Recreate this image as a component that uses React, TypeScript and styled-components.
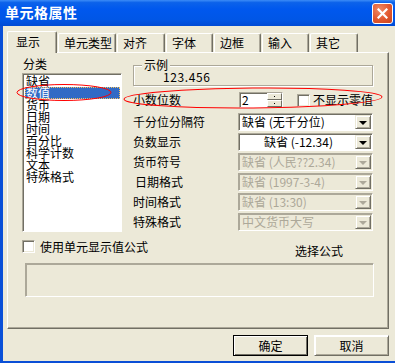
import { FC } from "react";
import styled, { createGlobalStyle } from "styled-components";

const GlobalStyle = createGlobalStyle`
  html, body {
    margin: 0;
    padding: 0;
    background: #ffffff;
  }
  body {
    font-family: "Noto Sans CJK SC", "Liberation Sans", sans-serif;
    font-size: 12px;
    color: #000000;
  }
`;

const FACE = "#ECE9D8";
const SHADOW = "#ACA899";
const DARK = "#716F64";
const GRAY_TEXT = "#ACA899";

// window frame
const Window = styled.div`
  position: relative;
  width: 395px;
  height: 363px;
  display: flex;
  flex-direction: column;
  overflow: hidden;
`;

const TitleBar = styled.div`
  height: 26px;
  flex: none;
  display: flex;
  align-items: center;
  justify-content: space-between;
  padding: 0 2px 2px 5px;
  box-sizing: border-box;
  background: linear-gradient(
    180deg,
    #3c8cf7 0%,
    #0c62ea 10%,
    #0058ee 35%,
    #0056e6 75%,
    #004ad4 100%
  );
`;

const Title = styled.span`
  color: #ffffff;
  font-size: 14px;
  font-weight: bold;
  letter-spacing: 0.5px;
  line-height: 16px;
`;

const CloseButton = styled.div`
  width: 21px;
  height: 21px;
  margin-top: 2px;
  box-sizing: border-box;
  border: 1px solid #ffffff;
  border-radius: 3px;
  background: radial-gradient(circle at 35% 30%, #f08a66 0%, #e2582f 55%, #c8431d 100%);
  display: flex;
  align-items: center;
  justify-content: center;
`;

const Frame = styled.div`
  flex: 1;
  display: flex;
  flex-direction: column;
  background: ${FACE};
  border-left: 3px solid #0a50d8;
  border-bottom: 2px solid #0a4fd6;
  padding: 5px 6px 0 4px;
`;

// tabs
const TabStrip = styled.div`
  display: flex;
  align-items: flex-start;
  height: 22px;
  margin-bottom: -1px;
  position: relative;
  z-index: 1;
`;

const Tab = styled.div<{ $active?: boolean; $w: number }>`
  width: ${(p) => p.$w}px;
  box-sizing: border-box;
  height: ${(p) => (p.$active ? 22 : 19)}px;
  margin-top: ${(p) => (p.$active ? 0 : 2)}px;
  margin-right: 1px;
  padding: ${(p) => (p.$active ? "3px 0 0 8px" : "2px 0 0 5px")};
  line-height: 14px;
  background: ${FACE};
  border-top: 1px solid #ffffff;
  border-left: 1px solid #ffffff;
  border-right: 1px solid ${DARK};
  box-shadow: inset -1px 0 0 ${SHADOW};
  border-radius: 2px 2px 0 0;
`;

const Panel = styled.div`
  height: 277px;
  box-sizing: border-box;
  border-top: 1px solid #ffffff;
  border-left: 1px solid #ffffff;
  border-right: 1px solid ${DARK};
  border-bottom: 1px solid ${DARK};
  box-shadow: inset -1px -1px 0 ${SHADOW};
  padding: 4px 15px 0 14px;
  display: flex;
  flex-direction: column;
`;

const TopSection = styled.div`
  display: flex;
  gap: 11px;
`;

const LeftCol = styled.div`
  width: 100px;
  display: flex;
  flex-direction: column;
`;

const Caption = styled.div`
  height: 16px;
  line-height: 14px;
  padding-left: 1px;
`;

const ListBox = styled.div`
  height: 159px;
  box-sizing: border-box;
  background: #ffffff;
  border-top: 1px solid ${SHADOW};
  border-left: 1px solid ${SHADOW};
  border-right: 1px solid #ffffff;
  border-bottom: 1px solid #ffffff;
  box-shadow: inset 1px 1px 0 ${DARK};
  padding: 1px 1px 0 2px;
`;

const ListItem = styled.div<{ $selected?: boolean }>`
  height: 12px;
  line-height: 12px;
  padding-left: 1px;
  box-sizing: border-box;
  white-space: nowrap;
  color: ${(p) => (p.$selected ? "#ffffff" : "#000000")};
  background: ${(p) => (p.$selected ? "#316ac5" : "transparent")};
  outline: ${(p) => (p.$selected ? "1px dotted #f0c060" : "none")};
  outline-offset: -1px;
`;

const RightCol = styled.div`
  width: 240px;
  display: flex;
  flex-direction: column;
`;

const GroupBox = styled.fieldset`
  margin: 1px 0 0;
  padding: 0 0 2px 8px;
  height: 28px;
  box-sizing: border-box;
  border: 1px solid ${SHADOW};
  box-shadow: 1px 1px 0 #ffffff, inset 1px 1px 0 #ffffff;
`;

const Legend = styled.legend`
  padding: 0 2px;
  line-height: 14px;
  background: ${FACE};
`;

const SampleText = styled.div`
  padding-left: 21px;
  margin-top: -1px;
  line-height: 12px;
  letter-spacing: 0.6px;
`;

const SpinRow = styled.div`
  display: flex;
  align-items: center;
  height: 16px;
  margin-top: 6px;
`;

const FieldLabel = styled.div<{ $indent?: number }>`
  width: 105px;
  flex: none;
  padding-left: ${(p) => p.$indent ?? 0}px;
  box-sizing: border-box;
  white-space: nowrap;
  line-height: 14px;
`;

const SpinBox = styled.div`
  width: 44px;
  height: 16px;
  margin-left: 1px;
  box-sizing: border-box;
  display: flex;
  background: #ffffff;
  border-top: 1px solid ${SHADOW};
  border-left: 1px solid ${SHADOW};
  border-right: 1px solid #ffffff;
  border-bottom: 1px solid #ffffff;
  box-shadow: inset 1px 1px 0 ${DARK};
`;

const SpinValue = styled.div`
  flex: 1;
  padding-left: 2px;
  line-height: 14px;
`;

const SpinButtons = styled.div`
  width: 15px;
  display: flex;
  flex-direction: column;
`;

const SpinHalf = styled.div<{ $down?: boolean }>`
  flex: 1;
  background: ${FACE};
  border-top: 1px solid #ffffff;
  border-left: 1px solid #ffffff;
  border-right: 1px solid ${DARK};
  border-bottom: 1px solid ${DARK};
  display: flex;
  align-items: center;
  justify-content: center;

  &::after {
    content: "";
    width: 1px;
    height: 1px;
    background: #000000;
  }
`;

const CheckBox = styled.div`
  width: 13px;
  height: 13px;
  flex: none;
  box-sizing: border-box;
  background: #ffffff;
  border-top: 1px solid ${SHADOW};
  border-left: 1px solid ${SHADOW};
  border-right: 1px solid #ffffff;
  border-bottom: 1px solid #ffffff;
  box-shadow: inset 1px 1px 0 ${DARK}, inset -1px -1px 0 ${FACE};
`;

const CheckLabel = styled.span<{ $gap: number }>`
  margin-left: ${(p) => p.$gap}px;
  white-space: nowrap;
  line-height: 14px;
`;

const SpinCheck = styled.div`
  display: flex;
  align-items: center;
  margin-left: 14px;
`;

const ComboList = styled.div`
  display: flex;
  flex-direction: column;
  gap: 2px;
  margin-top: 5px;
`;

const ComboRow = styled.div`
  display: flex;
  align-items: center;
  height: 18px;
`;

const Combo = styled.div<{ $disabled?: boolean }>`
  width: 135px;
  height: 18px;
  box-sizing: border-box;
  display: flex;
  background: ${(p) => (p.$disabled ? FACE : "#ffffff")};
  border-top: 1px solid ${SHADOW};
  border-left: 1px solid ${SHADOW};
  border-right: 1px solid #ffffff;
  border-bottom: 1px solid #ffffff;
  box-shadow: inset 1px 1px 0 ${(p) => (p.$disabled ? SHADOW : DARK)};
`;

const ComboText = styled.div<{ $disabled?: boolean; $center?: boolean }>`
  flex: 1;
  padding-left: 3px;
  line-height: 16px;
  white-space: nowrap;
  overflow: hidden;
  text-align: ${(p) => (p.$center ? "center" : "left")};
  color: ${(p) => (p.$disabled ? GRAY_TEXT : "#000000")};
`;

const DropButton = styled.div<{ $disabled?: boolean }>`
  width: 16px;
  box-sizing: border-box;
  margin: 1px 1px 1px 0;
  background: ${FACE};
  border-top: 1px solid ${FACE};
  border-left: 1px solid ${FACE};
  border-right: 1px solid ${DARK};
  border-bottom: 1px solid ${DARK};
  box-shadow: inset 1px 1px 0 #ffffff, inset -1px -1px 0 ${SHADOW};
  display: flex;
  align-items: center;
  justify-content: center;

  &::after {
    content: "";
    width: 0;
    height: 0;
    margin-top: 1px;
    border-left: 4px solid transparent;
    border-right: 4px solid transparent;
    border-top: 4px solid ${(p) => (p.$disabled ? GRAY_TEXT : "#000000")};
  }
`;

const FormulaRow = styled.div`
  display: flex;
  align-items: flex-start;
  height: 17px;
  margin-top: 8px;
`;

const FormulaPick = styled.span`
  margin-left: auto;
  margin-right: 30px;
  margin-top: 4px;
  line-height: 13px;
`;

const FormulaBox = styled.div`
  height: 34px;
  margin: 6px -1px 0 3px;
  box-sizing: border-box;
  background: ${FACE};
  border-top: 1px solid ${SHADOW};
  border-left: 1px solid ${SHADOW};
  border-right: 1px solid #ffffff;
  border-bottom: 1px solid #ffffff;
  box-shadow: inset 1px 1px 0 ${SHADOW};
`;

const ButtonBar = styled.div`
  display: flex;
  justify-content: flex-end;
  gap: 6px;
  margin-top: 6px;
`;

const PushButton = styled.div<{ $default?: boolean }>`
  width: 75px;
  height: 21px;
  box-sizing: border-box;
  background: ${FACE};
  display: flex;
  align-items: center;
  justify-content: center;
  line-height: 14px;
  border: 1px solid ${(p) => (p.$default ? "#000000" : FACE)};
  box-shadow: ${(p) =>
    p.$default
      ? `inset 1px 1px 0 #ffffff, inset -1px -1px 0 ${DARK}`
      : `inset 1px 1px 0 #ffffff, inset -1px -1px 0 ${SHADOW}`};
  ${(p) =>
    !p.$default &&
    `border-top-color: #ffffff; border-left-color: #ffffff; border-right-color: ${DARK}; border-bottom-color: ${DARK};`}
`;

// red hand-drawn marks lying over the dialog
const Marks = styled.svg`
  position: absolute;
  left: 0;
  top: 0;
  pointer-events: none;
`;

const tabs = [
  { label: "显示", w: 50 },
  { label: "单元类型", w: 58 },
  { label: "对齐", w: 48 },
  { label: "字体", w: 47 },
  { label: "边框", w: 47 },
  { label: "输入", w: 47 },
  { label: "其它", w: 48 },
];

const categories = ["缺省", "数值", "货币", "日期", "时间", "百分比", "科学计数", "文本", "特殊格式"];

const combos = [
  { label: "千分位分隔符", value: "缺省 (无千分位)" },
  { label: "负数显示", value: "缺省 (-12.34)", center: true },
  { label: "货币符号", value: "缺省 (人民??2.34)", disabled: true },
  { label: "日期格式", value: "缺省 (1997-3-4)", disabled: true, indent: 2 },
  { label: "时间格式", value: "缺省 (13:30)", disabled: true },
  { label: "特殊格式", value: "中文货币大写", disabled: true },
];

const App: FC = () => {
  return (
    <>
      <GlobalStyle />
      <Window>
        <TitleBar>
          <Title>单元格属性</Title>
          <CloseButton>
            <svg width="11" height="11" viewBox="0 0 11 11">
              <path d="M1.5 1.5 L9.5 9.5 M9.5 1.5 L1.5 9.5" stroke="#ffffff" strokeWidth="2.2" strokeLinecap="square" />
            </svg>
          </CloseButton>
        </TitleBar>

        <Frame>
          <TabStrip>
            {tabs.map((t, i) => (
              <Tab key={t.label} $w={t.w} $active={i === 0}>
                {t.label}
              </Tab>
            ))}
          </TabStrip>

          <Panel>
            <TopSection>
              <LeftCol>
                <Caption>分类</Caption>
                <ListBox>
                  {categories.map((c, i) => (
                    <ListItem key={c} $selected={i === 1}>
                      {c}
                    </ListItem>
                  ))}
                </ListBox>
              </LeftCol>

              <RightCol>
                <GroupBox>
                  <Legend>示例</Legend>
                  <SampleText>123.456</SampleText>
                </GroupBox>

                <SpinRow>
                  <FieldLabel>小数位数</FieldLabel>
                  <SpinBox>
                    <SpinValue>2</SpinValue>
                    <SpinButtons>
                      <SpinHalf />
                      <SpinHalf $down />
                    </SpinButtons>
                  </SpinBox>
                  <SpinCheck>
                    <CheckBox />
                    <CheckLabel $gap={3}>不显示零值</CheckLabel>
                  </SpinCheck>
                </SpinRow>

                <ComboList>
                  {combos.map((c) => (
                    <ComboRow key={c.label}>
                      <FieldLabel $indent={c.indent}>{c.label}</FieldLabel>
                      <Combo $disabled={c.disabled}>
                        <ComboText $disabled={c.disabled} $center={c.center}>
                          {c.value}
                        </ComboText>
                        <DropButton $disabled={c.disabled} />
                      </Combo>
                    </ComboRow>
                  ))}
                </ComboList>
              </RightCol>
            </TopSection>

            <FormulaRow>
              <CheckBox />
              <CheckLabel $gap={5}>使用单元显示值公式</CheckLabel>
              <FormulaPick>选择公式</FormulaPick>
            </FormulaRow>
            <FormulaBox />
          </Panel>

          <ButtonBar>
            <PushButton $default>确定</PushButton>
            <PushButton>取消</PushButton>
          </ButtonBar>
        </Frame>

        <Marks width="395" height="363" viewBox="0 0 395 363">
          <ellipse cx="64" cy="92.5" rx="47" ry="8" fill="none" stroke="#ff0000" strokeWidth="1" />
          <ellipse cx="253" cy="98" rx="129" ry="10" fill="none" stroke="#ff0000" strokeWidth="1" transform="rotate(-0.5 253 98)" />
        </Marks>
      </Window>
    </>
  );
};

export default App;
